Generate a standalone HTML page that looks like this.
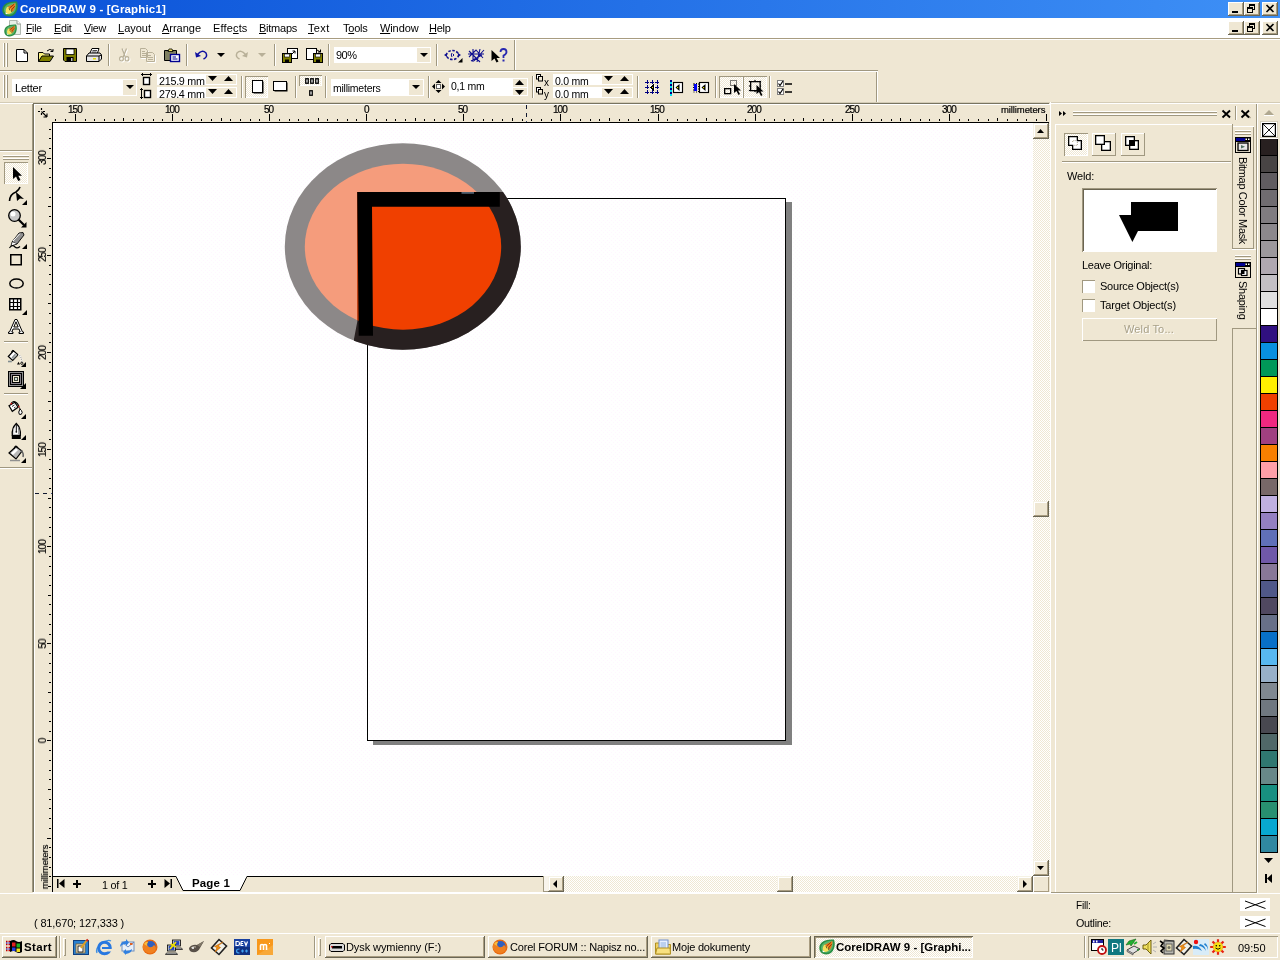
<!DOCTYPE html>
<html lang="en">
<head>
<meta charset="utf-8">
<title>CorelDRAW 9 - [Graphic1]</title>
<style>
html,body{margin:0;padding:0;}
body{width:1280px;height:960px;overflow:hidden;background:#EFE7D3;font-family:"Liberation Sans",sans-serif;font-size:11px;color:#000;position:relative;}
.a{position:absolute;}
.t{position:absolute;white-space:nowrap;line-height:13px;font-size:11px;will-change:transform;}
u{text-decoration:underline;text-underline-offset:1px;}
.hl{position:absolute;height:1px;}
.vl{position:absolute;width:1px;}
.btn{position:absolute;background:#EFE7D3;box-shadow:inset -1px -1px 0 #6A6654,inset 1px 1px 0 #fff,inset -2px -2px 0 #A89C80;}
.sunk{position:absolute;box-shadow:inset 1px 1px 0 #A09880,inset -1px -1px 0 #fff;}
.wht{position:absolute;background:#fff;}
svg{position:absolute;overflow:visible;}
</style>
</head>
<body>
<!-- s1_title.py -->
<div class="a" style="left:0px;top:0px;width:1280px;height:18px;background:linear-gradient(90deg,#0A52D8 0%,#3E90F6 100%);"></div>
<svg style="left:2px;top:1px" width="16" height="16" viewBox="0 0 17 17"><path d="M15.800 0.600 C17.300 4 17.200 9.500 14 13.500 C11.500 16.500 6 17.600 2.500 14.700 C-0.500 11.700 -0.300 7 2.500 4 C5.500 1 11 0.200 15.800 0.600 Z" fill="#2A8E44"/><path d="M14.500 2 C15.600 5 15.300 9 12.800 12.300 C10.600 14.800 6.500 15.600 3.800 13.400 C1.500 11 1.700 7.500 3.800 5.200 C6.200 2.800 10.500 1.800 14.500 2 Z" fill="#58B46C"/><path d="M14.200 2.200 L5.500 6.500 L11.500 11.500 Q14.800 7 14.200 2.200 Z" fill="#EE7A1C"/><path d="M12.800 3.500 L8 7.500 M13.500 5.500 L10 9.500" stroke="#7A3208" stroke-width="0.900" fill="none"/><path d="M5.500 6 Q9 7 11 11.500 Q8.500 14.800 5 13.200 Q2.600 10.500 5.500 6 Z" fill="#F6E05C"/><path d="M7.500 7.500 L8.500 10 M10.500 9.500 L10 11.500" stroke="#50380C" stroke-width="0.900"/><path d="M3.500 12.200 L6.500 13.600 L4.200 14.200 Z" fill="#fff"/></svg>
<div class="t" style="left:20.00px;top:2.00px;line-height:14px;font-size:11.5px;font-weight:bold;color:#fff;letter-spacing:0.173px;">CorelDRAW 9 - [Graphic1]</div>
<div class="btn" style="left:1228px;top:2px;width:16px;height:14px;"><div class="a" style="left:4px;top:9px;width:6px;height:2px;background:#000"></div></div>
<div class="btn" style="left:1244px;top:2px;width:16px;height:14px;"><div class="a" style="left:5px;top:2px;width:6px;height:6px;box-sizing:border-box;border:1px solid #000;border-top-width:2px;"></div><div class="a" style="left:3px;top:5px;width:6px;height:6px;box-sizing:border-box;border:1px solid #000;border-top-width:2px;background:#EFE7D3"></div></div>
<div class="btn" style="left:1262px;top:2px;width:16px;height:14px;"><svg style="left:4px;top:3px" width="8" height="7" viewBox="0 0 8 7"><path d="M0.5 0 L7.5 7 M7.5 0 L0.5 7" stroke="#000" stroke-width="1.6" fill="none"/></svg></div>
<div class="a" style="left:0px;top:18px;width:1280px;height:20px;background:#fff;"></div>
<div class="a" style="left:0px;top:38px;width:1280px;height:1px;background:#A89C80;"></div>
<div class="a" style="left:0px;top:39px;width:1280px;height:1px;background:#fff;"></div>
<svg style="left:5px;top:20px" width="16" height="17" viewBox="0 0 16 17"><path d="M4.5 0.5 H12 L15.5 4 V14.5 H4.5 Z" fill="#E8F0E8" stroke="#B0B8B0"/><path d="M12 0.5 V4 H15.5" fill="#fff" stroke="#909890"/></svg>
<svg style="left:4px;top:24px" width="13" height="13" viewBox="0 0 17 17"><path d="M15.800 0.600 C17.300 4 17.200 9.500 14 13.500 C11.500 16.500 6 17.600 2.500 14.700 C-0.500 11.700 -0.300 7 2.500 4 C5.500 1 11 0.200 15.800 0.600 Z" fill="#2A8E44"/><path d="M14.500 2 C15.600 5 15.300 9 12.800 12.300 C10.600 14.800 6.500 15.600 3.800 13.400 C1.500 11 1.700 7.500 3.800 5.200 C6.200 2.800 10.500 1.800 14.500 2 Z" fill="#58B46C"/><path d="M14.200 2.200 L5.500 6.500 L11.500 11.500 Q14.800 7 14.200 2.200 Z" fill="#EE7A1C"/><path d="M12.800 3.500 L8 7.500 M13.500 5.500 L10 9.500" stroke="#7A3208" stroke-width="0.900" fill="none"/><path d="M5.500 6 Q9 7 11 11.500 Q8.500 14.800 5 13.200 Q2.600 10.500 5.500 6 Z" fill="#F6E05C"/><path d="M7.500 7.500 L8.500 10 M10.500 9.500 L10 11.500" stroke="#50380C" stroke-width="0.900"/><path d="M3.500 12.200 L6.500 13.600 L4.200 14.200 Z" fill="#fff"/></svg>
<div class="t" style="left:26.00px;top:23.00px;line-height:12px;font-size:10.25px;letter-spacing:-0.204px;"><u>F</u>ile</div>
<div class="t" style="left:54.00px;top:22.00px;line-height:13px;font-size:10.75px;letter-spacing:-0.256px;"><u>E</u>dit</div>
<div class="t" style="left:84.00px;top:22.00px;line-height:13px;font-size:10.75px;letter-spacing:-0.276px;"><u>V</u>iew</div>
<div class="t" style="left:118.00px;top:22.00px;line-height:13px;letter-spacing:-0.004px;"><u>L</u>ayout</div>
<div class="t" style="left:162.00px;top:22.00px;line-height:13px;letter-spacing:-0.019px;"><u>A</u>rrange</div>
<div class="t" style="left:213.00px;top:22.00px;line-height:13px;letter-spacing:0.154px;">Effe<u>c</u>ts</div>
<div class="t" style="left:259.00px;top:22.00px;line-height:13px;letter-spacing:-0.248px;"><u>B</u>itmaps</div>
<div class="t" style="left:308.00px;top:22.00px;line-height:13px;letter-spacing:0.332px;"><u>T</u>ext</div>
<div class="t" style="left:343.00px;top:22.00px;line-height:13px;letter-spacing:-0.236px;">T<u>o</u>ols</div>
<div class="t" style="left:380.00px;top:22.00px;line-height:13px;letter-spacing:-0.104px;"><u>W</u>indow</div>
<div class="t" style="left:429.00px;top:22.00px;line-height:13px;letter-spacing:-0.281px;"><u>H</u>elp</div>
<div class="btn" style="left:1228px;top:21px;width:16px;height:14px;"><div class="a" style="left:4px;top:9px;width:6px;height:2px;background:#000"></div></div>
<div class="btn" style="left:1244px;top:21px;width:16px;height:14px;"><div class="a" style="left:5px;top:2px;width:6px;height:6px;box-sizing:border-box;border:1px solid #000;border-top-width:2px;"></div><div class="a" style="left:3px;top:5px;width:6px;height:6px;box-sizing:border-box;border:1px solid #000;border-top-width:2px;background:#EFE7D3"></div></div>
<div class="btn" style="left:1262px;top:21px;width:16px;height:14px;"><svg style="left:4px;top:3px" width="8" height="7" viewBox="0 0 8 7"><path d="M0.5 0 L7.5 7 M7.5 0 L0.5 7" stroke="#000" stroke-width="1.6" fill="none"/></svg></div>
<!-- s2_toolbar1.py -->
<div class="a" style="left:3px;top:43px;width:1px;height:24px;background:#fff;"></div>
<div class="a" style="left:4px;top:43px;width:1px;height:24px;background:#A09880;"></div>
<div class="a" style="left:6px;top:43px;width:1px;height:24px;background:#fff;"></div>
<div class="a" style="left:7px;top:43px;width:1px;height:24px;background:#A09880;"></div>
<svg style="left:16px;top:49px" width="12" height="13" viewBox="0 0 12 13"><path d="M0.5 0.5 H8 L11.5 4 V12.5 H0.5 Z" fill="#fff" stroke="#000"/><path d="M8 0.5 V4 H11.5" fill="none" stroke="#000"/></svg>
<svg style="left:38px;top:48px" width="16" height="14" viewBox="0 0 16 14"><path d="M9 3 Q12 0 14.5 2.5 M15 1 V3.5 H12.5" fill="none" stroke="#000"/><path d="M0.5 13.5 V4.5 H5 L6.5 6 H11.5 V8" fill="#F8F080" stroke="#000"/><path d="M0.5 13.5 L4 8 H15.5 L12 13.5 Z" fill="#808000" stroke="#000"/></svg>
<svg style="left:63px;top:48px" width="14" height="14" viewBox="0 0 14 14"><path d="M0.5 0.5 H13.5 V13.5 H2 L0.5 12 Z" fill="#808000" stroke="#000"/><rect x="3" y="1" width="8" height="5.5" fill="#fff" stroke="#000" stroke-width="0.8"/><rect x="3.5" y="9" width="7" height="4.5" fill="#000"/><rect x="8" y="10" width="1.5" height="3" fill="#C0C0C0"/></svg>
<svg style="left:86px;top:48px" width="16" height="14" viewBox="0 0 16 14"><path d="M4 5 L6 0.5 H13 L11.5 5" fill="#fff" stroke="#000"/><path d="M6.5 2.5 H11 M6 4 H10.5" stroke="#000" stroke-width="0.7"/><path d="M0.5 8 L3 5 H14 L15.5 7 V11 L13 13.5 H0.5 Z" fill="#E8E8E8" stroke="#000"/><path d="M0.5 8 H13 V13.5 M13 8 L15.5 7" fill="none" stroke="#000"/><rect x="7" y="10" width="3" height="1.5" fill="#E8E000"/></svg>
<div class="a" style="left:108px;top:44px;width:1px;height:22px;background:#A09880;"></div>
<div class="a" style="left:109px;top:44px;width:1px;height:22px;background:#fff;"></div>
<svg style="left:119px;top:48px" width="12" height="15" viewBox="0 0 12 15"><g transform="translate(1,1)"><path d="M3 0.500 L6.300 9 M7.500 0.500 L4.200 9" stroke="#fff" stroke-width="1.200" fill="none"/><ellipse cx="2.500" cy="10.800" rx="1.900" ry="2.200" fill="none" stroke="#fff" stroke-width="1.100"/><ellipse cx="8" cy="10.800" rx="1.900" ry="2.200" fill="none" stroke="#fff" stroke-width="1.100"/></g><path d="M3 0.500 L6.300 9 M7.500 0.500 L4.200 9" stroke="#B8B098" stroke-width="1.200" fill="none"/><ellipse cx="2.500" cy="10.800" rx="1.900" ry="2.200" fill="none" stroke="#B8B098" stroke-width="1.100"/><ellipse cx="8" cy="10.800" rx="1.900" ry="2.200" fill="none" stroke="#B8B098" stroke-width="1.100"/></svg>
<svg style="left:140px;top:48px" width="17" height="16" viewBox="0 0 17 16"><g transform="translate(1,1)"><path d="M0.500 0.500 H5.500 L7.500 2.500 V9.500 H0.500 Z M6.500 4.500 H12.500 L14.500 6.500 V13.500 H6.500 Z" fill="none" stroke="#fff"/><path d="M2 3.500 H5 M2 5.500 H6 M2 7.500 H6 M8 7.500 H11 M8 9.500 H13 M8 11.500 H13" stroke="#fff" stroke-width="1"/></g><path d="M0.500 0.500 H5.500 L7.500 2.500 V9.500 H0.500 Z M6.500 4.500 H12.500 L14.500 6.500 V13.500 H6.500 Z" fill="#EFE7D3" stroke="#B8B098"/><path d="M2 3.500 H5 M2 5.500 H6 M2 7.500 H6 M8 7.500 H11 M8 9.500 H13 M8 11.500 H13" stroke="#B8B098" stroke-width="1"/></svg>
<svg style="left:164px;top:48px" width="17" height="14" viewBox="0 0 17 14"><path d="M0.5 2.5 H12.5 V12.5 H0.5 Z" fill="#808060" stroke="#000"/><path d="M4 3.5 L5 1 H8 L9 3.5 Z" fill="#F0E060" stroke="#000" stroke-width="0.8"/><rect x="6.5" y="6.500" width="9" height="7" fill="#fff" stroke="#000090" stroke-width="1.4"/><path d="M8.500 9 H12 M8.500 11 H13.500" stroke="#000090" stroke-width="1.2"/></svg>
<div class="a" style="left:186px;top:44px;width:1px;height:22px;background:#A09880;"></div>
<div class="a" style="left:187px;top:44px;width:1px;height:22px;background:#fff;"></div>
<svg style="left:195px;top:50px" width="13" height="10" viewBox="0 0 13 10"><path d="M2.500 4.500 Q7 -1 11 3 Q13 7 8.500 9" fill="none" stroke="#1010A0" stroke-width="1.5"/><path d="M0 2 L1 7.500 L6 6 Z" fill="#1010A0"/></svg>
<svg style="left:217px;top:53px" width="8" height="4" viewBox="0 0 8 4"><path d="M0 0 H8 L4.0 4 Z" fill="#000"/></svg>
<svg style="left:235px;top:50px" width="13" height="10" viewBox="0 0 13 10"><path d="M10.500 4.500 Q6 -1 2 3 Q0 7 4.500 9" fill="none" stroke="#B8B098" stroke-width="1.5"/><path d="M13 2 L12 7.500 L7 6 Z" fill="#B8B098"/></svg>
<svg style="left:258px;top:53px" width="8" height="4" viewBox="0 0 8 4"><path d="M0 0 H8 L4.0 4 Z" fill="#B8B098"/></svg>
<div class="a" style="left:274px;top:44px;width:1px;height:22px;background:#A09880;"></div>
<div class="a" style="left:275px;top:44px;width:1px;height:22px;background:#fff;"></div>
<svg style="left:282px;top:48px" width="16" height="15" viewBox="0 0 16 15"><rect x="5.500" y="0.500" width="10" height="10" fill="#fff" stroke="#000"/><path d="M13 3 L9.500 6.500 M13 3 H10.500 M13 3 V5.500" stroke="#000" fill="none"/><rect x="0.500" y="5.500" width="9" height="9" fill="#808000" stroke="#000"/><rect x="2.500" y="6" width="5" height="3" fill="#fff" stroke="#000" stroke-width="0.6"/><rect x="3" y="11.500" width="4" height="3" fill="#000"/></svg>
<svg style="left:306px;top:48px" width="17" height="15" viewBox="0 0 17 15"><rect x="0.500" y="0.500" width="10" height="11" fill="#fff" stroke="#000"/><rect x="7.500" y="5.500" width="9" height="9" fill="#808000" stroke="#000"/><rect x="9.500" y="6" width="5" height="3" fill="#fff" stroke="#000" stroke-width="0.6"/><rect x="10" y="11.500" width="4" height="3" fill="#000"/><path d="M11 2 L14.500 4 M14.500 4 H12 M14.500 4 V1.500" stroke="#000" fill="none"/></svg>
<div class="a" style="left:328px;top:44px;width:1px;height:22px;background:#A09880;"></div>
<div class="a" style="left:329px;top:44px;width:1px;height:22px;background:#fff;"></div>
<div class="a" style="left:334px;top:47px;width:97px;height:16px;background:#fff;"></div>
<div class="a" style="left:417px;top:48px;width:13px;height:14px;background:#EFE7D3;"></div>
<svg style="left:419.5px;top:53px" width="8" height="4" viewBox="0 0 8 4"><path d="M0 0 H8 L4.0 4 Z" fill="#000"/></svg>
<div class="t" style="left:336.00px;top:49.00px;line-height:13px;letter-spacing:-0.505px;">90%</div>
<div class="a" style="left:436px;top:44px;width:1px;height:22px;background:#A09880;"></div>
<div class="a" style="left:437px;top:44px;width:1px;height:22px;background:#fff;"></div>
<svg style="left:444px;top:49px" width="19" height="14" viewBox="0 0 19 14"><ellipse cx="8.500" cy="6" rx="6" ry="4.500" fill="none" stroke="#101090" stroke-width="1.6" stroke-dasharray="2.5 1.5"/><path d="M0 6 L3 4 V8 Z M17 6 L14 4 V8 Z" fill="#101090"/><path d="M8 4 Q6.500 6 8 8 M9.500 5 V7" stroke="#101090" fill="none"/><path d="M18.500 9 V13.500 H14 Z" fill="#000"/></svg>
<svg style="left:468px;top:49px" width="17" height="14" viewBox="0 0 17 14"><path d="M1 2 L12 13 M1 8 L8 1 L15 9 M5 0 V13 M0 5 H16 M12 0 L9 13 M16 1 L6 12 M3 12 L14 6" stroke="#101090" stroke-width="1.1" fill="none"/></svg>
<svg style="left:491px;top:48px" width="17" height="15" viewBox="0 0 17 15"><path d="M0.500 2 V13 L3.500 10.500 L5.500 14.500 L7.500 13.500 L5.500 10 H9 Z" fill="#000"/><path d="M9.500 4 Q9.500 1 12.500 1 Q15.500 1 15.500 4 Q15.500 6 12.500 7.500 V10" fill="none" stroke="#2828B0" stroke-width="1.8"/><rect x="11.500" y="11.500" width="2" height="2" fill="#2828B0"/></svg>
<div class="a" style="left:514px;top:40px;width:1px;height:30px;background:#A09880;"></div>
<div class="a" style="left:515px;top:40px;width:1px;height:30px;background:#fff;"></div>
<!-- s3_propbar.py -->
<div class="a" style="left:0px;top:70px;width:878px;height:1px;background:#A09880;"></div>
<div class="a" style="left:0px;top:71px;width:878px;height:1px;background:#fff;"></div>
<div class="a" style="left:876px;top:72px;width:1px;height:30px;background:#A09880;"></div>
<div class="a" style="left:877px;top:71px;width:1px;height:31px;background:#fff;"></div>
<div class="a" style="left:3px;top:75px;width:1px;height:23px;background:#fff;"></div>
<div class="a" style="left:4px;top:75px;width:1px;height:23px;background:#A09880;"></div>
<div class="a" style="left:6px;top:75px;width:1px;height:23px;background:#fff;"></div>
<div class="a" style="left:7px;top:75px;width:1px;height:23px;background:#A09880;"></div>
<div class="a" style="left:12px;top:79px;width:125px;height:17px;background:#fff;"></div>
<div class="a" style="left:123px;top:80px;width:13px;height:15px;background:#EFE7D3;"></div>
<svg style="left:126px;top:85px" width="8" height="4" viewBox="0 0 8 4"><path d="M0 0 H8 L4.0 4 Z" fill="#000"/></svg>
<div class="t" style="left:15.00px;top:82.00px;line-height:13px;letter-spacing:-0.188px;">Letter</div>
<svg style="left:141px;top:73px" width="12" height="13" viewBox="0 0 12 13"><path d="M0 1.500 H11 M1.500 0 V3 M9.500 0 V3" stroke="#000" fill="none"/><rect x="2.500" y="4.500" width="6" height="7" fill="#fff" stroke="#000" stroke-width="1.4"/></svg>
<svg style="left:140px;top:88px" width="12" height="12" viewBox="0 0 12 12"><path d="M1.500 0 V11 M0 1.500 H3 M0 9.500 H3" stroke="#000" fill="none"/><rect x="4.500" y="2.500" width="6" height="7" fill="#fff" stroke="#000" stroke-width="1.4"/></svg>
<div class="a" style="left:157px;top:74px;width:80px;height:11px;background:#fff;"></div>
<div class="a" style="left:206px;top:75px;width:30px;height:9px;background:#EFE7D3;"></div>
<svg style="left:208px;top:76px" width="9" height="5" viewBox="0 0 9 5"><path d="M0 0 H9 L4.5 5 Z" fill="#000"/></svg>
<svg style="left:224px;top:76px" width="9" height="5" viewBox="0 0 9 5"><path d="M0 5 H9 L4.5 0 Z" fill="#000"/></svg>
<div class="a" style="left:157px;top:87px;width:80px;height:11px;background:#fff;"></div>
<div class="a" style="left:206px;top:88px;width:30px;height:9px;background:#EFE7D3;"></div>
<svg style="left:208px;top:89px" width="9" height="5" viewBox="0 0 9 5"><path d="M0 0 H9 L4.5 5 Z" fill="#000"/></svg>
<svg style="left:224px;top:89px" width="9" height="5" viewBox="0 0 9 5"><path d="M0 5 H9 L4.5 0 Z" fill="#000"/></svg>
<div class="t" style="left:159.00px;top:75.00px;line-height:13px;font-size:10.75px;letter-spacing:-0.262px;">215.9 mm</div>
<div class="t" style="left:159.00px;top:88.00px;line-height:13px;font-size:10.75px;letter-spacing:-0.262px;">279.4 mm</div>
<div class="a" style="left:241px;top:76px;width:1px;height:22px;background:#A09880;"></div>
<div class="a" style="left:242px;top:76px;width:1px;height:22px;background:#fff;"></div>
<div class="a" style="left:245px;top:76px;width:23px;height:22px;background-image:repeating-conic-gradient(#fff 0 25%,#EFE7D3 0 50%);background-size:2px 2px;box-shadow:inset 1px 1px 0 #A09880,inset -1px -1px 0 #fff;"></div>
<svg style="left:252px;top:80px" width="12" height="14" viewBox="0 0 12 14"><rect x="1.500" y="1.500" width="10" height="12" fill="#000"/><rect x="0.500" y="0.500" width="10" height="12" fill="#fff" stroke="#000"/></svg>
<svg style="left:273px;top:81px" width="15" height="11" viewBox="0 0 15 11"><rect x="1.500" y="1.500" width="13" height="9" fill="#000"/><rect x="0.500" y="0.500" width="13" height="9" fill="#fff" stroke="#000"/></svg>
<div class="a" style="left:295px;top:76px;width:1px;height:22px;background:#A09880;"></div>
<div class="a" style="left:296px;top:76px;width:1px;height:22px;background:#fff;"></div>
<div class="a" style="left:299px;top:75px;width:23px;height:11px;background-image:repeating-conic-gradient(#fff 0 25%,#EFE7D3 0 50%);background-size:2px 2px;box-shadow:inset 1px 1px 0 #A09880,inset -1px -1px 0 #fff;"></div>
<svg style="left:305px;top:78px" width="14" height="6" viewBox="0 0 14 6"><rect x="0.750" y="0.750" width="2.500" height="4.500" fill="#fff" stroke="#000" stroke-width="1.300"/><rect x="5.750" y="0.750" width="2.500" height="4.500" fill="#fff" stroke="#000" stroke-width="1.300"/><rect x="10.750" y="0.750" width="2.500" height="4.500" fill="#fff" stroke="#000" stroke-width="1.300"/></svg>
<svg style="left:309px;top:90px" width="4" height="6" viewBox="0 0 4 6"><rect x="0.750" y="0.750" width="2.500" height="4.500" fill="#fff" stroke="#000" stroke-width="1.300"/></svg>
<div class="a" style="left:325px;top:76px;width:1px;height:22px;background:#A09880;"></div>
<div class="a" style="left:326px;top:76px;width:1px;height:22px;background:#fff;"></div>
<div class="a" style="left:331px;top:79px;width:93px;height:17px;background:#fff;"></div>
<div class="a" style="left:409px;top:80px;width:14px;height:15px;background:#EFE7D3;"></div>
<svg style="left:411.5px;top:85px" width="8" height="4" viewBox="0 0 8 4"><path d="M0 0 H8 L4.0 4 Z" fill="#000"/></svg>
<div class="t" style="left:333.00px;top:82.00px;line-height:13px;font-size:10.5px;letter-spacing:-0.242px;">millimeters</div>
<div class="a" style="left:428px;top:76px;width:1px;height:22px;background:#A09880;"></div>
<div class="a" style="left:429px;top:76px;width:1px;height:22px;background:#fff;"></div>
<svg style="left:432px;top:80px" width="13" height="13" viewBox="0 0 13 13"><path d="M6.500 0 L9.500 3 H3.500 Z M6.500 13 L9.500 10 H3.500 Z M0 6.500 L3 3.500 V9.500 Z M13 6.500 L10 3.500 V9.500 Z" fill="#000"/><rect x="4.500" y="4.500" width="4" height="4" fill="#fff" stroke="#606060"/></svg>
<div class="a" style="left:449px;top:78px;width:79px;height:18px;background:#fff;"></div>
<div class="a" style="left:513px;top:79px;width:14px;height:8px;background:#EFE7D3;"></div>
<div class="a" style="left:513px;top:88px;width:14px;height:7px;background:#EFE7D3;"></div>
<svg style="left:515px;top:80px" width="9" height="5" viewBox="0 0 9 5"><path d="M0 5 H9 L4.5 0 Z" fill="#000"/></svg>
<svg style="left:515px;top:89.5px" width="9" height="5" viewBox="0 0 9 5"><path d="M0 0 H9 L4.5 5 Z" fill="#000"/></svg>
<div class="t" style="left:451.00px;top:80.00px;line-height:13px;font-size:10.5px;letter-spacing:-0.251px;">0,1 mm</div>
<div class="a" style="left:532px;top:76px;width:1px;height:22px;background:#A09880;"></div>
<div class="a" style="left:533px;top:76px;width:1px;height:22px;background:#fff;"></div>
<svg style="left:536px;top:74px" width="7" height="8" viewBox="0 0 7 8"><rect x="0.500" y="0.500" width="4" height="4.500" fill="#fff" stroke="#000"/><rect x="2.500" y="2.500" width="4" height="4.500" fill="#EFE7D3" stroke="#000"/></svg>
<div class="t" style="left:544.00px;top:77.00px;line-height:12px;font-size:10px;">x</div>
<svg style="left:536px;top:87px" width="7" height="8" viewBox="0 0 7 8"><rect x="0.500" y="0.500" width="4" height="4.500" fill="#fff" stroke="#000"/><rect x="2.500" y="2.500" width="4" height="4.500" fill="#EFE7D3" stroke="#000"/></svg>
<div class="t" style="left:544.00px;top:89.00px;line-height:12px;font-size:10px;">y</div>
<div class="a" style="left:553px;top:74px;width:80px;height:11px;background:#fff;"></div>
<div class="a" style="left:602px;top:75px;width:30px;height:9px;background:#EFE7D3;"></div>
<svg style="left:604px;top:76px" width="9" height="5" viewBox="0 0 9 5"><path d="M0 0 H9 L4.5 5 Z" fill="#000"/></svg>
<svg style="left:620px;top:76px" width="9" height="5" viewBox="0 0 9 5"><path d="M0 5 H9 L4.5 0 Z" fill="#000"/></svg>
<div class="a" style="left:553px;top:87px;width:80px;height:11px;background:#fff;"></div>
<div class="a" style="left:602px;top:88px;width:30px;height:9px;background:#EFE7D3;"></div>
<svg style="left:604px;top:89px" width="9" height="5" viewBox="0 0 9 5"><path d="M0 0 H9 L4.5 5 Z" fill="#000"/></svg>
<svg style="left:620px;top:89px" width="9" height="5" viewBox="0 0 9 5"><path d="M0 5 H9 L4.5 0 Z" fill="#000"/></svg>
<div class="t" style="left:555.00px;top:75.00px;line-height:13px;font-size:10.5px;letter-spacing:-0.251px;">0.0 mm</div>
<div class="t" style="left:555.00px;top:88.00px;line-height:13px;font-size:10.5px;letter-spacing:-0.251px;">0.0 mm</div>
<div class="a" style="left:637px;top:76px;width:1px;height:22px;background:#A09880;"></div>
<div class="a" style="left:638px;top:76px;width:1px;height:22px;background:#fff;"></div>
<svg style="left:645px;top:80px" width="15" height="15" viewBox="0 0 15 15"><g shape-rendering="crispEdges"><rect x="5" y="5" width="5" height="5" fill="#fff"/><rect x="0" y="2" width="4" height="1" fill="#000080"/><rect x="2" y="0" width="1" height="4" fill="#000080"/><rect x="0" y="7" width="4" height="1" fill="#000080"/><rect x="2" y="5" width="1" height="4" fill="#000080"/><rect x="0" y="12" width="4" height="1" fill="#000080"/><rect x="2" y="10" width="1" height="4" fill="#000080"/><rect x="5" y="2" width="4" height="1" fill="#000080"/><rect x="7" y="0" width="1" height="4" fill="#000080"/><rect x="5" y="12" width="4" height="1" fill="#000080"/><rect x="7" y="10" width="1" height="4" fill="#000080"/><rect x="10" y="2" width="4" height="1" fill="#000080"/><rect x="12" y="0" width="1" height="4" fill="#000080"/><rect x="10" y="7" width="4" height="1" fill="#000080"/><rect x="12" y="5" width="1" height="4" fill="#000080"/><rect x="10" y="12" width="4" height="1" fill="#000080"/><rect x="12" y="10" width="1" height="4" fill="#000080"/><path d="M5 7.500 L9 4 V11 Z" fill="#000"/><rect x="6.500" y="7" width="1.200" height="1.200" fill="#E8E000"/></g></svg>
<svg style="left:670px;top:80px" width="14" height="16" viewBox="0 0 14 16"><g shape-rendering="crispEdges"><rect x="0" y="0" width="2" height="2" fill="#000080"/><rect x="0" y="2" width="2" height="2" fill="#00E0F0"/><rect x="0" y="4" width="2" height="2" fill="#000080"/><rect x="0" y="6" width="2" height="2" fill="#00E0F0"/><rect x="0" y="8" width="2" height="2" fill="#000080"/><rect x="0" y="10" width="2" height="2" fill="#00E0F0"/><rect x="0" y="12" width="2" height="2" fill="#000080"/><rect x="0" y="14" width="2" height="2" fill="#00E0F0"/></g><rect x="3.5" y="2.500" width="9" height="10" fill="#fff" stroke="#000" stroke-width="1.150"/><path d="M5.5 7.500 L9.5 4 V11 Z" fill="#000"/><rect x="7" y="7" width="1.200" height="1.200" fill="#E8E000"/></svg>
<svg style="left:693px;top:80px" width="17" height="16" viewBox="0 0 17 16"><rect x="0.500" y="3.500" width="5" height="8.500" fill="none" stroke="#000" stroke-dasharray="1 1.500"/><rect x="1" y="4" width="3" height="7" fill="#0000F0"/><rect x="6.5" y="2.500" width="9" height="10" fill="#fff" stroke="#000" stroke-width="1.150"/><path d="M8.5 7.500 L12.5 4 V11 Z" fill="#000"/><rect x="10" y="7" width="1.200" height="1.200" fill="#E8E000"/></svg>
<div class="a" style="left:715px;top:76px;width:1px;height:22px;background:#A09880;"></div>
<div class="a" style="left:716px;top:76px;width:1px;height:22px;background:#fff;"></div>
<div class="a" style="left:719px;top:76px;width:24px;height:22px;background-image:repeating-conic-gradient(#fff 0 25%,#EFE7D3 0 50%);background-size:2px 2px;box-shadow:inset 1px 1px 0 #A09880,inset -1px -1px 0 #fff;"></div>
<div class="a" style="left:743px;top:76px;width:24px;height:22px;background-image:repeating-conic-gradient(#fff 0 25%,#EFE7D3 0 50%);background-size:2px 2px;box-shadow:inset 1px 1px 0 #A09880,inset -1px -1px 0 #fff;"></div>
<svg style="left:724px;top:79px" width="17" height="17" viewBox="0 0 17 17"><rect x="0.650" y="9.650" width="6" height="5" fill="none" stroke="#000" stroke-width="1.300"/><rect x="6.500" y="1.500" width="6" height="5" fill="none" stroke="#000" stroke-dasharray="1 1"/><g transform="translate(10,5)"><path d="M0 0 V9 L2.500 7 L4.500 11 L6 10 L4 6.500 H7 Z" fill="#000"/></g></svg>
<svg style="left:748px;top:79px" width="17" height="18" viewBox="0 0 17 18"><rect x="2.650" y="2.650" width="9.500" height="9" fill="none" stroke="#000" stroke-width="1.300"/><rect x="0.9" y="1.9" width="1.200" height="1.200" fill="#000"/><rect x="6.4" y="0.9" width="1.200" height="1.200" fill="#000"/><rect x="11.9" y="1.9" width="1.200" height="1.200" fill="#000"/><rect x="0.9" y="6.4" width="1.200" height="1.200" fill="#000"/><rect x="11.9" y="6.4" width="1.200" height="1.200" fill="#000"/><rect x="0.9" y="10.9" width="1.200" height="1.200" fill="#000"/><rect x="6.4" y="11.9" width="1.200" height="1.200" fill="#000"/><rect x="11.9" y="10.9" width="1.200" height="1.200" fill="#000"/><g transform="translate(8.500,6)"><path d="M0 0 V9 L2.500 7 L4.500 11 L6 10 L4 6.500 H7 Z" fill="#000"/></g></svg>
<div class="a" style="left:769px;top:76px;width:1px;height:22px;background:#A09880;"></div>
<div class="a" style="left:770px;top:76px;width:1px;height:22px;background:#fff;"></div>
<svg style="left:777px;top:80px" width="15" height="15" viewBox="0 0 15 15"><rect x="0.500" y="0.5" width="6" height="6" fill="#fff" stroke="#808080"/><path d="M1.500 3.5 L3 5.5 L6 1.0" stroke="#000" stroke-width="1.200" fill="none"/><path d="M8 4.0 H15" stroke="#000" stroke-width="1.500"/><rect x="0.500" y="8.5" width="6" height="6" fill="#fff" stroke="#808080"/><path d="M1.500 11.5 L3 13.5 L6 9.0" stroke="#000" stroke-width="1.200" fill="none"/><path d="M8 12.0 H15" stroke="#000" stroke-width="1.500"/></svg>
<div class="a" style="left:0px;top:102px;width:1280px;height:1px;background:#D4CCB6;"></div>
<div class="a" style="left:0px;top:103px;width:33px;height:1px;background:#fff;"></div>
<div class="a" style="left:33px;top:103px;width:1016px;height:1px;background:#787460;"></div>
<div class="a" style="left:34px;top:104px;width:1016px;height:1px;background:#fff;"></div>
<div class="a" style="left:1050px;top:103px;width:230px;height:1px;background:#fff;"></div>
<!-- s4_toolbox.py -->
<div class="a" style="left:32px;top:104px;width:1px;height:788px;background:#A09880;"></div>
<div class="a" style="left:33px;top:103px;width:1px;height:789px;background:#787460;"></div>
<div class="a" style="left:34px;top:104px;width:1px;height:788px;background:#fff;"></div>
<div class="a" style="left:0px;top:150px;width:32px;height:1px;background:#A09880;"></div>
<div class="a" style="left:0px;top:151px;width:32px;height:1px;background:#fff;"></div>
<div class="a" style="left:3px;top:155px;width:26px;height:1px;background:#fff;"></div>
<div class="a" style="left:3px;top:156px;width:26px;height:1px;background:#A09880;"></div>
<div class="a" style="left:3px;top:158px;width:26px;height:1px;background:#fff;"></div>
<div class="a" style="left:3px;top:159px;width:26px;height:1px;background:#A09880;"></div>
<div class="a" style="left:4px;top:162px;width:24px;height:22px;background-image:repeating-conic-gradient(#fff 0 25%,#EFE7D3 0 50%);background-size:2px 2px;box-shadow:inset 1px 1px 0 #A09880,inset -1px -1px 0 #fff;"></div>
<svg style="left:13px;top:167px" width="9" height="14" viewBox="0 0 9 14"><path d="M0 0 V12 L3 9.500 L5.200 14 L7.500 13 L5.300 8.700 H9 Z" fill="#000"/></svg>
<svg style="left:8px;top:187px" width="19" height="18" viewBox="0 0 19 18"><path d="M1.500 14 Q2 7 8 5 Q11 3 12 0" fill="none" stroke="#000" stroke-width="1.600"/><path d="M8 5 L9 14 L12 11.500 L16 12 Z" fill="#000"/><path d="M19 13 V18 H14 Z" fill="#000"/></svg>
<svg style="left:8px;top:209px" width="19" height="18" viewBox="0 0 19 18"><circle cx="6.500" cy="6.500" r="5.800" fill="#C8C8C8" stroke="#000" stroke-width="1.300"/><circle cx="5" cy="5" r="2.500" fill="#fff"/><path d="M10.500 10.500 L16 16" stroke="#000" stroke-width="2.200"/><path d="M18.500 13 V18.500 H13 Z" fill="#000"/></svg>
<svg style="left:9px;top:232px" width="18" height="17" viewBox="0 0 18 17"><path d="M3 10 L10 1 L14 0.500 L15 3 L8 12 Z" fill="#909090" stroke="#000" stroke-width="0.900"/><path d="M4 9 L11 1.500" stroke="#fff" stroke-width="1"/><path d="M3 10 L2 14 L8 12" fill="#fff" stroke="#000" stroke-width="0.800"/><path d="M0.500 16 Q3 12 6 15 Q8 17 11 14.500" fill="none" stroke="#000" stroke-width="1.200"/><path d="M18 12 V17 H13 Z" fill="#000"/></svg>
<svg style="left:10px;top:254px" width="12" height="12" viewBox="0 0 12 12"><rect x="0.750" y="0.750" width="10.500" height="10" fill="none" stroke="#000" stroke-width="1.500"/></svg>
<svg style="left:9px;top:278px" width="15" height="11" viewBox="0 0 15 11"><ellipse cx="7.500" cy="5.500" rx="6.700" ry="4.600" fill="none" stroke="#000" stroke-width="1.500"/></svg>
<svg style="left:9px;top:298px" width="18" height="17" viewBox="0 0 18 17"><rect x="0.750" y="0.750" width="11" height="11" fill="#fff" stroke="#000" stroke-width="1.500"/><path d="M4.500 0 V12 M8.500 0 V12 M0 4.500 H12 M0 8.500 H12" stroke="#000" stroke-width="1.200"/><path d="M18 12 V17 H13 Z" fill="#000"/></svg>
<svg style="left:8px;top:319px" width="16" height="15" viewBox="0 0 16 15"><path d="M0.500 14.500 H5 V13 H3.800 L5 10 H11 L12.200 13 H11 V14.500 H15.500 V13 H14.500 L9 0.500 H7 L1.500 13 H0.500 Z M5.800 8 L8 2.800 L10.200 8 Z" fill="#fff" stroke="#000" stroke-width="1" fill-rule="evenodd"/></svg>
<div class="a" style="left:4px;top:341px;width:24px;height:1px;background:#A09880;"></div>
<div class="a" style="left:4px;top:342px;width:24px;height:1px;background:#fff;"></div>
<svg style="left:8px;top:349px" width="18" height="18" viewBox="0 0 18 18"><path d="M0.300 7.500 L5.500 1.800 L10 5.700 L4.700 11.500 Z" fill="#fff" stroke="#000" stroke-width="1.200"/><path d="M5 10 L9 5.800 M4 9 L7.500 5" stroke="#8A9090" stroke-width="1.200"/><path d="M3.600 3.500 Q3.800 -0.300 6.600 2.600 M4 2 H6" fill="none" stroke="#000" stroke-width="1"/><path d="M0 12.500 H3.800" stroke="#808C90" stroke-width="1.600"/><path d="M10.500 5.500 Q13 7 14 13" fill="none" stroke="#fff" stroke-width="2.200" stroke-dasharray="1 1"/><path d="M11.500 6.500 Q13.500 8.500 14 13" fill="none" stroke="#A8A8A8" stroke-width="1.200" stroke-dasharray="1 1"/><path d="M9 15.500 L10.500 12.800 L12 15.500 Z" fill="#000"/><circle cx="13.800" cy="14.300" r="1.100" fill="none" stroke="#000" stroke-width="0.900"/><path d="M18 13 V18 H13 Z" fill="#000"/></svg>
<svg style="left:8px;top:371px" width="18" height="18" viewBox="0 0 18 18"><g shape-rendering="crispEdges"><rect x="0" y="0" width="16" height="16" fill="#000"/><rect x="1" y="1" width="14" height="14" fill="#8E8E8E"/><rect x="2" y="2" width="12" height="12" fill="#000"/><rect x="3" y="3" width="10" height="10" fill="#8A848C"/><rect x="4" y="4" width="8" height="8" fill="#000"/><rect x="5" y="5" width="6" height="6" fill="#F0E8D0"/><rect x="6" y="6" width="4" height="4" fill="#404840"/><rect x="7" y="7" width="2" height="2" fill="#D0E0D8"/></g><path d="M18 12 V18 H12 Z" fill="#000"/></svg>
<div class="a" style="left:4px;top:393px;width:24px;height:1px;background:#A09880;"></div>
<div class="a" style="left:4px;top:394px;width:24px;height:1px;background:#fff;"></div>
<svg style="left:8px;top:401px" width="18" height="18" viewBox="0 0 18 18"><path d="M1 4.800 L6.800 1.200 L10 6.300 L4.300 10.300 Z" fill="#fff" stroke="#000" stroke-width="1.200"/><path d="M4 5.500 L6.500 4 M6 7 L7.500 6" stroke="#000" stroke-width="0.800"/><path d="M3.200 2.800 Q4.500 -0.800 8.500 1.800 Q10.300 3.200 10.800 5.500" fill="none" stroke="#000" stroke-width="1.200"/><circle cx="3.300" cy="2.600" r="0.900" fill="#D01010"/><path d="M10.600 4.800 L11.400 6.600" stroke="#D01010" stroke-width="1.200"/><path d="M11.400 6.600 L12.200 8.300" stroke="#000" stroke-width="1"/><path d="M12 8 Q9.800 11.500 11.300 13.300 Q13.800 14.300 14.200 11.500 Q13.800 9.300 12 8 Z" fill="#fff" stroke="#000" stroke-width="1"/><path d="M18 13 V18 H13 Z" fill="#000"/></svg>
<svg style="left:11px;top:423px" width="15" height="18" viewBox="0 0 15 18"><path d="M5.300 0.500 Q10 5 9.300 12.300 H1.300 Q0.600 5 5.300 0.500 Z" fill="#fff" stroke="#000" stroke-width="1.300"/><path d="M5.300 1.500 V8" stroke="#000" stroke-width="1"/><circle cx="5.300" cy="8.800" r="0.900" fill="#000"/><path d="M7.300 4 Q8.300 8 7.800 11.300" stroke="#808080" stroke-width="1.200" fill="none"/><path d="M3 5 Q2.500 8 2.800 11" stroke="#C0C0C0" stroke-width="0.800" fill="none"/><rect x="0.800" y="12.300" width="9" height="3.700" fill="#000"/><path d="M15 12 V17 H10 Z" fill="#000"/></svg>
<svg style="left:8px;top:445px" width="18" height="18" viewBox="0 0 18 18"><path d="M1 8 L8 1.500 L14 6 L8 14 Z" fill="#B8B8B8" stroke="#000" stroke-width="1.200"/><path d="M3 8 L8 3.500 L10 5 L5 10 Z" fill="#fff"/><path d="M6 4 Q7 -1 10 3" fill="none" stroke="#000" stroke-width="1.200"/><path d="M13 5.500 Q16 8 15 12" stroke="#606060" stroke-width="1.500" fill="none"/><path d="M2 15.500 H12" stroke="#909090" stroke-width="1.500"/><path d="M18 13 V18 H13 Z" fill="#000"/></svg>
<div class="a" style="left:0px;top:467px;width:32px;height:1px;background:#A09880;"></div>
<div class="a" style="left:0px;top:468px;width:32px;height:1px;background:#fff;"></div>
<!-- s5_canvas.py -->
<div class="a" style="left:52px;top:122px;width:997px;height:770px;background:#000;"></div>
<div class="a" style="left:53px;top:123px;width:980px;height:753px;background:#FFFFFF;"></div>
<svg style="left:0px;top:0px" width="1280" height="960" viewBox="0 0 1280 960"><defs><pattern id="dp" width="4" height="4" patternUnits="userSpaceOnUse"><rect x="3" y="0" width="1" height="1" fill="#FFF6FF"/><rect x="1" y="2" width="1" height="1" fill="#FFF6FF"/></pattern></defs><rect x="53" y="123" width="980" height="753" fill="url(#dp)" shape-rendering="crispEdges"/></svg>
<svg style="left:0px;top:0px" width="1280" height="130" viewBox="0 0 1280 130"><path d="M55.5 119 V121 M65.5 119 V121 M75.5 114 V121 M85.5 119 V121 M94.5 119 V121 M104.5 119 V121 M114.5 119 V121 M123.5 117.5 V121 M133.5 119 V121 M143.5 119 V121 M153.5 119 V121 M162.5 119 V121 M172.5 114 V121 M182.5 119 V121 M191.5 119 V121 M201.5 119 V121 M211.5 119 V121 M221.5 117.5 V121 M230.5 119 V121 M240.5 119 V121 M250.5 119 V121 M259.5 119 V121 M269.5 114 V121 M279.5 119 V121 M289.5 119 V121 M298.5 119 V121 M308.5 119 V121 M318.5 117.5 V121 M327.5 119 V121 M337.5 119 V121 M347.5 119 V121 M356.5 119 V121 M366.5 114 V121 M376.5 119 V121 M386.5 119 V121 M395.5 119 V121 M405.5 119 V121 M415.5 117.5 V121 M424.5 119 V121 M434.5 119 V121 M444.5 119 V121 M454.5 119 V121 M463.5 114 V121 M473.5 119 V121 M483.5 119 V121 M492.5 119 V121 M502.5 119 V121 M512.5 117.5 V121 M522.5 119 V121 M531.5 119 V121 M541.5 119 V121 M551.5 119 V121 M560.5 114 V121 M570.5 119 V121 M580.5 119 V121 M590.5 119 V121 M599.5 119 V121 M609.5 117.5 V121 M619.5 119 V121 M628.5 119 V121 M638.5 119 V121 M648.5 119 V121 M658.5 114 V121 M667.5 119 V121 M677.5 119 V121 M687.5 119 V121 M696.5 119 V121 M706.5 117.5 V121 M716.5 119 V121 M725.5 119 V121 M735.5 119 V121 M745.5 119 V121 M755.5 114 V121 M764.5 119 V121 M774.5 119 V121 M784.5 119 V121 M793.5 119 V121 M803.5 117.5 V121 M813.5 119 V121 M823.5 119 V121 M832.5 119 V121 M842.5 119 V121 M852.5 114 V121 M861.5 119 V121 M871.5 119 V121 M881.5 119 V121 M891.5 119 V121 M900.5 117.5 V121 M910.5 119 V121 M920.5 119 V121 M929.5 119 V121 M939.5 119 V121 M949.5 114 V121 M959.5 119 V121 M968.5 119 V121 M978.5 119 V121 M988.5 119 V121 M997.5 117.5 V121 M1007.5 119 V121 M1017.5 119 V121 M1026.5 119 V121 M1036.5 119 V121 M1046.5 114 V121 " stroke="#000" stroke-width="1" fill="none" shape-rendering="crispEdges"/></svg>
<div class="t" style="left:68.00px;top:104.00px;line-height:12px;font-size:10px;letter-spacing:-0.961px;-webkit-text-stroke:0.2px #000;">150</div>
<div class="t" style="left:165.00px;top:104.00px;line-height:12px;font-size:10px;letter-spacing:-0.961px;-webkit-text-stroke:0.2px #000;">100</div>
<div class="t" style="left:264.00px;top:104.00px;line-height:12px;font-size:10px;letter-spacing:-0.961px;-webkit-text-stroke:0.2px #000;">50</div>
<div class="t" style="left:364.00px;top:104.00px;line-height:12px;font-size:10px;letter-spacing:-0.961px;-webkit-text-stroke:0.2px #000;">0</div>
<div class="t" style="left:458.00px;top:104.00px;line-height:12px;font-size:10px;letter-spacing:-0.961px;-webkit-text-stroke:0.2px #000;">50</div>
<div class="t" style="left:553.00px;top:104.00px;line-height:12px;font-size:10px;letter-spacing:-0.961px;-webkit-text-stroke:0.2px #000;">100</div>
<div class="t" style="left:650.00px;top:104.00px;line-height:12px;font-size:10px;letter-spacing:-0.961px;-webkit-text-stroke:0.2px #000;">150</div>
<div class="t" style="left:747.00px;top:104.00px;line-height:12px;font-size:10px;letter-spacing:-0.961px;-webkit-text-stroke:0.2px #000;">200</div>
<div class="t" style="left:845.00px;top:104.00px;line-height:12px;font-size:10px;letter-spacing:-0.961px;-webkit-text-stroke:0.2px #000;">250</div>
<div class="t" style="left:942.00px;top:104.00px;line-height:12px;font-size:10px;letter-spacing:-0.961px;-webkit-text-stroke:0.2px #000;">300</div>
<div class="t" style="left:1001.00px;top:104.00px;line-height:11px;font-size:9.5px;letter-spacing:-0.099px;-webkit-text-stroke:0.2px #000;">millimeters</div>
<svg style="left:38px;top:108px" width="11" height="11" viewBox="0 0 11 11"><path d="M3.500 0 V2 M3.500 5 V7 M0 3.500 H2 M5 3.500 H7" stroke="#000" stroke-width="1.200"/><path d="M3.500 3.500 L9 9 M9 9 V5.500 M9 9 H5.500" stroke="#000" stroke-width="1.100" fill="none"/></svg>
<svg style="left:0px;top:0px" width="60" height="960" viewBox="0 0 60 960"><path d="M47.5 886.5 H51 M49 876.5 H51 M49 867.5 H51 M49 857.5 H51 M49 847.5 H51 M47 838.5 H51 M49 828.5 H51 M49 818.5 H51 M49 808.5 H51 M49 799.5 H51 M47.5 789.5 H51 M49 779.5 H51 M49 770.5 H51 M49 760.5 H51 M49 750.5 H51 M47 740.5 H51 M49 731.5 H51 M49 721.5 H51 M49 711.5 H51 M49 702.5 H51 M47.5 692.5 H51 M49 682.5 H51 M49 672.5 H51 M49 663.5 H51 M49 653.5 H51 M47 643.5 H51 M49 634.5 H51 M49 624.5 H51 M49 614.5 H51 M49 604.5 H51 M47.5 595.5 H51 M49 585.5 H51 M49 575.5 H51 M49 566.5 H51 M49 556.5 H51 M47 546.5 H51 M49 536.5 H51 M49 527.5 H51 M49 517.5 H51 M49 507.5 H51 M47.5 498.5 H51 M49 488.5 H51 M49 478.5 H51 M49 469.5 H51 M49 459.5 H51 M47 449.5 H51 M49 439.5 H51 M49 430.5 H51 M49 420.5 H51 M49 410.5 H51 M47.5 401.5 H51 M49 391.5 H51 M49 381.5 H51 M49 371.5 H51 M49 362.5 H51 M47 352.5 H51 M49 342.5 H51 M49 333.5 H51 M49 323.5 H51 M49 313.5 H51 M47.5 303.5 H51 M49 294.5 H51 M49 284.5 H51 M49 274.5 H51 M49 265.5 H51 M47 255.5 H51 M49 245.5 H51 M49 235.5 H51 M49 226.5 H51 M49 216.5 H51 M47.5 206.5 H51 M49 197.5 H51 M49 187.5 H51 M49 177.5 H51 M49 168.5 H51 M47 158.5 H51 M49 148.5 H51 M49 138.5 H51 M49 129.5 H51 " stroke="#000" stroke-width="1" fill="none" shape-rendering="crispEdges"/></svg>
<div class="t" style="left:43px;top:740.9px;font-size:10px;line-height:10px;width:0;height:0;-webkit-text-stroke:0.2px #000;"><div style="position:absolute;left:0;top:0;transform:translate(-50%,-50%) rotate(-90deg);letter-spacing:-0.961px;">0</div></div>
<div class="t" style="left:43px;top:643.8px;font-size:10px;line-height:10px;width:0;height:0;-webkit-text-stroke:0.2px #000;"><div style="position:absolute;left:0;top:0;transform:translate(-50%,-50%) rotate(-90deg);letter-spacing:-0.961px;">50</div></div>
<div class="t" style="left:43px;top:546.7px;font-size:10px;line-height:10px;width:0;height:0;-webkit-text-stroke:0.2px #000;"><div style="position:absolute;left:0;top:0;transform:translate(-50%,-50%) rotate(-90deg);letter-spacing:-0.961px;">100</div></div>
<div class="t" style="left:43px;top:449.6px;font-size:10px;line-height:10px;width:0;height:0;-webkit-text-stroke:0.2px #000;"><div style="position:absolute;left:0;top:0;transform:translate(-50%,-50%) rotate(-90deg);letter-spacing:-0.961px;">150</div></div>
<div class="t" style="left:43px;top:352.5px;font-size:10px;line-height:10px;width:0;height:0;-webkit-text-stroke:0.2px #000;"><div style="position:absolute;left:0;top:0;transform:translate(-50%,-50%) rotate(-90deg);letter-spacing:-0.961px;">200</div></div>
<div class="t" style="left:43px;top:255.4px;font-size:10px;line-height:10px;width:0;height:0;-webkit-text-stroke:0.2px #000;"><div style="position:absolute;left:0;top:0;transform:translate(-50%,-50%) rotate(-90deg);letter-spacing:-0.961px;">250</div></div>
<div class="t" style="left:43px;top:158.3px;font-size:10px;line-height:10px;width:0;height:0;-webkit-text-stroke:0.2px #000;"><div style="position:absolute;left:0;top:0;transform:translate(-50%,-50%) rotate(-90deg);letter-spacing:-0.961px;">300</div></div>
<div class="t" style="left:44.500px;top:866.800px;font-size:9.500px;line-height:10px;width:0;height:0;-webkit-text-stroke:0.2px #000;"><div style="position:absolute;left:0;top:0;transform:translate(-50%,-50%) rotate(-90deg);letter-spacing:-0.099px;">millimeters</div></div>
<div class="a" style="left:526px;top:105px;width:1px;height:4px;background:#101830;"></div>
<div class="a" style="left:526px;top:113px;width:1px;height:4px;background:#101830;"></div>
<div class="a" style="left:526px;top:121px;width:1px;height:1px;background:#405080;"></div>
<div class="a" style="left:35px;top:493px;width:4px;height:1px;background:#101830;"></div>
<div class="a" style="left:43px;top:493px;width:4px;height:1px;background:#101830;"></div>
<div class="a" style="left:51px;top:493px;width:1px;height:1px;background:#405080;"></div>
<div class="a" style="left:373px;top:202px;width:419px;height:543px;background:#808080;"></div>
<div class="a" style="left:367px;top:198px;width:419px;height:543px;background:#000;"></div>
<div class="a" style="left:368px;top:199px;width:417px;height:541px;background:#FFFFFF;"></div>
<svg style="left:0px;top:0px" width="1280" height="960" viewBox="0 0 1280 960"><rect x="368" y="199" width="417" height="541" fill="url(#dp)" shape-rendering="crispEdges"/></svg>
<svg style="left:0px;top:0px" width="1280" height="960" viewBox="0 0 1280 960"><defs><clipPath id="cq"><path d="M357.200 191.900 H600 V400 H353 L354 339 L357.400 321 Z"/></clipPath></defs><ellipse cx="402.800" cy="246.500" rx="118" ry="103.300" fill="#8C8888"/><ellipse cx="403" cy="246.700" rx="98.200" ry="83" fill="#F59C7C"/><g clip-path="url(#cq)"><ellipse cx="402.800" cy="246.500" rx="118" ry="103.300" fill="#282020"/><ellipse cx="403" cy="246.700" rx="98.200" ry="83" fill="#F04000"/></g><path d="M357.200 192 H499.800 V206.800 H372 L373 335.800 H358.700 Z" fill="#000"/><rect x="461.500" y="192" width="12.500" height="1.800" fill="#506070"/></svg>
<div class="a" style="left:1033px;top:123px;width:17px;height:753px;background:;background-image:repeating-conic-gradient(#fff 0 25%,#EFE7D3 0 50%);background-size:2px 2px;"></div>
<div class="a" style="left:1033px;top:123px;width:16px;height:16px;background:#EFE7D3;box-shadow:inset -1px -1px 0 #6A6654,inset 1px 1px 0 #F6F2E6,inset -2px -2px 0 #A89C80,inset 2px 2px 0 #fff;"></div>
<svg style="left:1037px;top:129px" width="7" height="4" viewBox="0 0 7 4"><path d="M0 4 H7 L3.5 0 Z" fill="#000"/></svg>
<div class="a" style="left:1033px;top:860px;width:16px;height:16px;background:#EFE7D3;box-shadow:inset -1px -1px 0 #6A6654,inset 1px 1px 0 #F6F2E6,inset -2px -2px 0 #A89C80,inset 2px 2px 0 #fff;"></div>
<svg style="left:1037px;top:866px" width="7" height="4" viewBox="0 0 7 4"><path d="M0 0 H7 L3.5 4 Z" fill="#000"/></svg>
<div class="a" style="left:1033px;top:501px;width:16px;height:16px;background:#EFE7D3;box-shadow:inset -1px -1px 0 #6A6654,inset 1px 1px 0 #F6F2E6,inset -2px -2px 0 #A89C80,inset 2px 2px 0 #fff;"></div>
<div class="a" style="left:1033px;top:876px;width:16px;height:16px;background:#EFE7D3;box-shadow:inset 1px 1px 0 #fff,inset -1px -1px 0 #A89C80;"></div>
<div class="a" style="left:53px;top:877px;width:491px;height:15px;background:#EFE7D3;"></div>
<div class="a" style="left:548px;top:876px;width:485px;height:16px;background:;background-image:repeating-conic-gradient(#fff 0 25%,#EFE7D3 0 50%);background-size:2px 2px;"></div>
<div class="a" style="left:543px;top:876px;width:5px;height:16px;background:#F8F4EC;box-shadow:inset 1px 0 0 #A09880,inset 0 -1px 0 #A09880;"></div>
<div class="a" style="left:548px;top:876px;width:16px;height:16px;background:#EFE7D3;box-shadow:inset -1px -1px 0 #6A6654,inset 1px 1px 0 #F6F2E6,inset -2px -2px 0 #A89C80,inset 2px 2px 0 #fff;"></div>
<svg style="left:553px;top:880px" width="4" height="8" viewBox="0 0 4 8"><path d="M4 0 V8 L0 4 Z" fill="#000"/></svg>
<div class="a" style="left:1017px;top:876px;width:16px;height:16px;background:#EFE7D3;box-shadow:inset -1px -1px 0 #6A6654,inset 1px 1px 0 #F6F2E6,inset -2px -2px 0 #A89C80,inset 2px 2px 0 #fff;"></div>
<svg style="left:1023px;top:880px" width="4" height="8" viewBox="0 0 4 8"><path d="M0 0 V8 L4 4 Z" fill="#000"/></svg>
<div class="a" style="left:777px;top:876px;width:16px;height:16px;background:#EFE7D3;box-shadow:inset -1px -1px 0 #6A6654,inset 1px 1px 0 #F6F2E6,inset -2px -2px 0 #A89C80,inset 2px 2px 0 #fff;"></div>
<svg style="left:170px;top:874px" width="90" height="20" viewBox="0 0 90 20"><path d="M6 2.500 L13 16.500 H70 L77 2.500" fill="#fff" stroke="#000" stroke-width="1"/><path d="M6.500 2.500 H76.500" stroke="#fff" stroke-width="1.400"/></svg>
<div class="t" style="left:192.00px;top:876.00px;line-height:14px;font-size:11.5px;font-weight:bold;letter-spacing:0.154px;">Page 1</div>
<svg style="left:57px;top:879px" width="8" height="9" viewBox="0 0 8 9"><path d="M0.750 0 V9" stroke="#000" stroke-width="1.500"/><path d="M7.500 0 V9 L2 4.500 Z" fill="#000"/></svg>
<svg style="left:73px;top:880px" width="8" height="8" viewBox="0 0 8 8"><path d="M4 0 V8 M0 4 H8" stroke="#000" stroke-width="2"/></svg>
<div class="t" style="left:102.00px;top:879.00px;line-height:13px;font-size:10.75px;letter-spacing:-0.232px;">1 of 1</div>
<svg style="left:148px;top:880px" width="8" height="8" viewBox="0 0 8 8"><path d="M4 0 V8 M0 4 H8" stroke="#000" stroke-width="2"/></svg>
<svg style="left:164px;top:879px" width="8" height="9" viewBox="0 0 8 9"><path d="M7.250 0 V9" stroke="#000" stroke-width="1.500"/><path d="M0.500 0 V9 L6 4.500 Z" fill="#000"/></svg>
<div class="a" style="left:33px;top:892px;width:1018px;height:1px;background:#fff;"></div>
<div class="a" style="left:0px;top:893px;width:1280px;height:1px;background:#fff;"></div>
<!-- s6_docker.py -->
<div class="a" style="left:1050px;top:102px;width:1px;height:790px;background:#fff;"></div>
<div class="a" style="left:1051px;top:892px;width:206px;height:1px;background:#A09880;"></div>
<svg style="left:1059px;top:111px" width="7" height="5" viewBox="0 0 7 5"><path d="M0 0 V5 L3 2.500 Z M4 0 V5 L7 2.500 Z" fill="#000"/></svg>
<div class="a" style="left:1073px;top:111px;width:144px;height:1px;background:#fff;"></div>
<div class="a" style="left:1073px;top:112px;width:144px;height:1px;background:#A09880;"></div>
<div class="a" style="left:1073px;top:114px;width:144px;height:1px;background:#fff;"></div>
<div class="a" style="left:1073px;top:115px;width:144px;height:1px;background:#A09880;"></div>
<svg style="left:1222px;top:110px" width="9" height="8" viewBox="0 0 9 8"><path d="M0.500 0.500 L8 7.500 M8 0.500 L0.500 7.500" stroke="#000" stroke-width="1.900"/></svg>
<div class="a" style="left:1235px;top:106px;width:1px;height:14px;background:#A09880;"></div>
<div class="a" style="left:1236px;top:106px;width:1px;height:14px;background:#fff;"></div>
<svg style="left:1241px;top:110px" width="10" height="8" viewBox="0 0 10 8"><path d="M1.500 1 L9.500 8" stroke="#A09880" stroke-width="1.300"/><path d="M0.500 0.500 L8 7.500 M8 0.500 L0.500 7.500" stroke="#000" stroke-width="1.900"/></svg>
<div class="a" style="left:1055px;top:124px;width:1px;height:768px;background:#fff;"></div>
<div class="a" style="left:1055px;top:124px;width:178px;height:1px;background:#fff;"></div>
<div class="a" style="left:1232px;top:124px;width:1px;height:125px;background:#A09880;"></div>
<div class="a" style="left:1232px;top:328px;width:1px;height:564px;background:#A09880;"></div>
<div class="a" style="left:1064px;top:133px;width:24px;height:23px;background-image:repeating-conic-gradient(#fff 0 25%,#EFE7D3 0 50%);background-size:2px 2px;box-shadow:inset 1px 1px 0 #A09880,inset -1px -1px 0 #fff;"></div>
<div class="a" style="left:1092px;top:133px;width:24px;height:23px;box-shadow:inset -1px -1px 0 #A09880,inset 1px 1px 0 #fff;"></div>
<div class="a" style="left:1121px;top:133px;width:24px;height:23px;box-shadow:inset -1px -1px 0 #A09880,inset 1px 1px 0 #fff;"></div>
<svg style="left:1068px;top:136px" width="14" height="14" viewBox="0 0 14 14"><path d="M0.650 0.650 H9.350 V4.650 H13.350 V13.350 H4.650 V9.350 H0.650 Z" fill="#fff" stroke="#000" stroke-width="1.300"/><path d="M4.650 6 V4.650 H8 M9.350 6 V9.350 H6" fill="none" stroke="#B0A890" stroke-width="1" stroke-dasharray="1 1"/></svg>
<svg style="left:1095px;top:135px" width="16" height="16" viewBox="0 0 16 16"><rect x="6.650" y="6.650" width="8.700" height="8.700" fill="#fff" stroke="#000" stroke-width="1.300"/><rect x="0.650" y="0.650" width="8.700" height="8.700" fill="#fff" stroke="#000" stroke-width="1.300"/></svg>
<svg style="left:1125px;top:136px" width="14" height="14" viewBox="0 0 14 14"><rect x="0.650" y="0.650" width="8.700" height="8.700" fill="#fff" stroke="#000" stroke-width="1.300"/><rect x="4.650" y="4.650" width="8.700" height="8.700" fill="#fff" stroke="#000" stroke-width="1.300"/><rect x="4" y="4" width="6" height="6" fill="#000"/></svg>
<div class="a" style="left:1062px;top:161px;width:169px;height:1px;background:#A09880;"></div>
<div class="a" style="left:1062px;top:162px;width:169px;height:1px;background:#fff;"></div>
<div class="t" style="left:1067.00px;top:170.00px;line-height:13px;letter-spacing:-0.184px;">Weld:</div>
<div class="a" style="left:1082px;top:188px;width:135px;height:64px;background:#fff;box-shadow:inset 1px 1px 0 #A09880,inset -1px -1px 0 #fff,inset 2px 2px 0 #6A6450;"></div>
<svg style="left:1082px;top:188px" width="135" height="64" viewBox="0 0 135 64"><path d="M49 14 H96 V43 H56 L50.400 54 L37 27 H49 Z" fill="#000"/></svg>
<div class="t" style="left:1082.00px;top:259.00px;line-height:13px;letter-spacing:-0.265px;">Leave Original:</div>
<div class="a" style="left:1082px;top:280px;width:13px;height:13px;background:#fff;box-shadow:inset 1px 1px 0 #A09880,inset -1px -1px 0 #fff;"></div>
<div class="t" style="left:1100.00px;top:280.00px;line-height:13px;letter-spacing:-0.220px;">Source Object(s)</div>
<div class="a" style="left:1082px;top:299px;width:13px;height:13px;background:#fff;box-shadow:inset 1px 1px 0 #A09880,inset -1px -1px 0 #fff;"></div>
<div class="t" style="left:1100.00px;top:299.00px;line-height:13px;letter-spacing:-0.140px;">Target Object(s)</div>
<div class="a" style="left:1082px;top:318px;width:135px;height:23px;box-shadow:inset 1px 1px 0 #fff,inset -1px -1px 0 #A09880;"></div>
<div class="t" style="left:1125.00px;top:324.00px;line-height:13px;color:#fff;letter-spacing:0.150px;">Weld To...</div>
<div class="t" style="left:1124.00px;top:323.00px;line-height:13px;color:#A8A088;letter-spacing:0.150px;">Weld To...</div>
<div class="a" style="left:1233px;top:126px;width:21px;height:1px;background:#fff;"></div>
<div class="a" style="left:1253px;top:127px;width:1px;height:122px;background:#A09880;"></div>
<div class="a" style="left:1232px;top:249px;width:24px;height:1px;background:#fff;"></div>
<div class="a" style="left:1233px;top:248px;width:21px;height:1px;background:#A09880;"></div>
<div class="a" style="left:1235px;top:130px;width:16px;height:1px;background:#fff;"></div>
<div class="a" style="left:1235px;top:131px;width:16px;height:1px;background:#A09880;"></div>
<div class="a" style="left:1235px;top:133px;width:16px;height:1px;background:#fff;"></div>
<div class="a" style="left:1235px;top:134px;width:16px;height:1px;background:#A09880;"></div>
<svg style="left:1235px;top:137px" width="16" height="16" viewBox="0 0 16 16"><rect x="0.500" y="0.500" width="15" height="15" fill="#EFE7D3" stroke="#000"/><rect x="1" y="1" width="14" height="4" fill="#000"/><rect x="1" y="1" width="9" height="3" fill="#000090"/><rect x="3" y="6" width="10" height="7.500" fill="#E8E8E8" stroke="#000" stroke-width="1.300"/><path d="M6 8 L10 9.700 L6 11.500 Z" fill="#507060"/><rect x="10.500" y="1.500" width="1.500" height="1.500" fill="#fff"/><rect x="13" y="1.500" width="1.500" height="1.500" fill="#fff"/></svg>
<div class="t" style="left:1242.8px;top:156.8px;width:0;height:0;font-size:11px;line-height:12px;"><div style="position:absolute;left:0;top:0;transform-origin:0 0;transform:rotate(90deg) translate(0,-50%);letter-spacing:-0.348px;">Bitmap Color Mask</div></div>
<div class="a" style="left:1232px;top:328px;width:24px;height:1px;background:#A09880;"></div>
<div class="a" style="left:1235px;top:255px;width:16px;height:1px;background:#fff;"></div>
<div class="a" style="left:1235px;top:256px;width:16px;height:1px;background:#A09880;"></div>
<div class="a" style="left:1235px;top:258px;width:16px;height:1px;background:#fff;"></div>
<div class="a" style="left:1235px;top:259px;width:16px;height:1px;background:#A09880;"></div>
<svg style="left:1235px;top:262px" width="16" height="16" viewBox="0 0 16 16"><rect x="0.500" y="0.500" width="15" height="15" fill="#EFE7D3" stroke="#000"/><rect x="1" y="1" width="14" height="4" fill="#000"/><rect x="1" y="1" width="9" height="3" fill="#000090"/><rect x="3.500" y="6.500" width="6" height="5.500" fill="#fff" stroke="#000" stroke-width="1.200"/><rect x="6.500" y="8.500" width="5.500" height="5" fill="#fff" stroke="#000" stroke-width="1.200"/><rect x="6.500" y="8.500" width="3" height="3.500" fill="#000"/><rect x="10.500" y="1.500" width="1.500" height="1.500" fill="#fff"/><rect x="13" y="1.500" width="1.500" height="1.500" fill="#fff"/></svg>
<div class="t" style="left:1243.3px;top:281px;width:0;height:0;font-size:11px;line-height:12px;"><div style="position:absolute;left:0;top:0;transform-origin:0 0;transform:rotate(90deg) translate(0,-50%);letter-spacing:-0.267px;">Shaping</div></div>
<!-- s7_palette.py -->
<div class="a" style="left:1256px;top:104px;width:1px;height:789px;background:#A09880;"></div>
<div class="a" style="left:1257px;top:104px;width:1px;height:789px;background:#fff;"></div>
<svg style="left:1264px;top:110px" width="10" height="5" viewBox="0 0 10 5"><path d="M0 5 H10 L5.0 0 Z" fill="#B0A890"/></svg>
<div class="a" style="left:1264px;top:115px;width:10px;height:1px;background:#fff;"></div>
<svg style="left:1260px;top:121px" width="18" height="17" viewBox="0 0 18 17"><rect x="0.500" y="0.500" width="17" height="16" fill="#fff" stroke="#B0A890" stroke-dasharray="1 1"/><rect x="2.600" y="2.600" width="12.800" height="12.800" fill="#fff" stroke="#000" stroke-width="1.200"/><path d="M3 3 L15 15 M15 3 L3 15" stroke="#000" stroke-width="0.900"/></svg>
<div class="a" style="left:1260px;top:138px;width:18px;height:1px;background:#fff;"></div>
<div class="a" style="left:1260px;top:139px;width:18px;height:714px;background:#000;"></div>
<div class="a" style="left:1261px;top:139px;width:16px;height:16px;background:#282020;"></div>
<div class="a" style="left:1261px;top:156px;width:16px;height:16px;background:#484444;"></div>
<div class="a" style="left:1261px;top:173px;width:16px;height:16px;background:#605C60;"></div>
<div class="a" style="left:1261px;top:190px;width:16px;height:16px;background:#706C70;"></div>
<div class="a" style="left:1261px;top:207px;width:16px;height:16px;background:#807C80;"></div>
<div class="a" style="left:1261px;top:224px;width:16px;height:16px;background:#8C888C;"></div>
<div class="a" style="left:1261px;top:241px;width:16px;height:16px;background:#9C989C;"></div>
<div class="a" style="left:1261px;top:258px;width:16px;height:16px;background:#B0A8B0;"></div>
<div class="a" style="left:1261px;top:275px;width:16px;height:16px;background:#C4C0C4;"></div>
<div class="a" style="left:1261px;top:292px;width:16px;height:16px;background:#E0E0E0;"></div>
<div class="a" style="left:1261px;top:309px;width:16px;height:16px;background:#FFFFFF;"></div>
<div class="a" style="left:1261px;top:326px;width:16px;height:16px;background:#301080;"></div>
<div class="a" style="left:1261px;top:343px;width:16px;height:16px;background:#0890E0;"></div>
<div class="a" style="left:1261px;top:360px;width:16px;height:16px;background:#009858;"></div>
<div class="a" style="left:1261px;top:377px;width:16px;height:16px;background:#FFF000;"></div>
<div class="a" style="left:1261px;top:394px;width:16px;height:16px;background:#F04000;"></div>
<div class="a" style="left:1261px;top:411px;width:16px;height:16px;background:#F02880;"></div>
<div class="a" style="left:1261px;top:428px;width:16px;height:16px;background:#A04080;"></div>
<div class="a" style="left:1261px;top:445px;width:16px;height:16px;background:#F88000;"></div>
<div class="a" style="left:1261px;top:462px;width:16px;height:16px;background:#FFA0A8;"></div>
<div class="a" style="left:1261px;top:479px;width:16px;height:16px;background:#786868;"></div>
<div class="a" style="left:1261px;top:496px;width:16px;height:16px;background:#C0B0E0;"></div>
<div class="a" style="left:1261px;top:513px;width:16px;height:16px;background:#9480C0;"></div>
<div class="a" style="left:1261px;top:530px;width:16px;height:16px;background:#6070B8;"></div>
<div class="a" style="left:1261px;top:547px;width:16px;height:16px;background:#7058A8;"></div>
<div class="a" style="left:1261px;top:564px;width:16px;height:16px;background:#887898;"></div>
<div class="a" style="left:1261px;top:581px;width:16px;height:16px;background:#505888;"></div>
<div class="a" style="left:1261px;top:598px;width:16px;height:16px;background:#504860;"></div>
<div class="a" style="left:1261px;top:615px;width:16px;height:16px;background:#687088;"></div>
<div class="a" style="left:1261px;top:632px;width:16px;height:16px;background:#0870C8;"></div>
<div class="a" style="left:1261px;top:649px;width:16px;height:16px;background:#58B8F0;"></div>
<div class="a" style="left:1261px;top:666px;width:16px;height:16px;background:#98B0C8;"></div>
<div class="a" style="left:1261px;top:683px;width:16px;height:16px;background:#808890;"></div>
<div class="a" style="left:1261px;top:700px;width:16px;height:16px;background:#707880;"></div>
<div class="a" style="left:1261px;top:717px;width:16px;height:16px;background:#484850;"></div>
<div class="a" style="left:1261px;top:734px;width:16px;height:16px;background:#506868;"></div>
<div class="a" style="left:1261px;top:751px;width:16px;height:16px;background:#307870;"></div>
<div class="a" style="left:1261px;top:768px;width:16px;height:16px;background:#688888;"></div>
<div class="a" style="left:1261px;top:785px;width:16px;height:16px;background:#189080;"></div>
<div class="a" style="left:1261px;top:802px;width:16px;height:16px;background:#289070;"></div>
<div class="a" style="left:1261px;top:819px;width:16px;height:16px;background:#08A8D0;"></div>
<div class="a" style="left:1261px;top:836px;width:16px;height:16px;background:#3088A0;"></div>
<svg style="left:1264px;top:858px" width="9" height="5" viewBox="0 0 9 5"><path d="M0 0 H9 L4.5 5 Z" fill="#000"/></svg>
<svg style="left:1265px;top:874px" width="7" height="9" viewBox="0 0 7 9"><path d="M1 0 V9" stroke="#000" stroke-width="2"/><path d="M7 0 V9 L2 4.500 Z" fill="#000"/></svg>
<!-- s8_status.py -->
<div class="t" style="left:34.00px;top:917.00px;line-height:13px;letter-spacing:-0.155px;">( 81,670; 127,333 )</div>
<div class="t" style="left:1076.00px;top:900.00px;line-height:12px;font-size:10.12px;letter-spacing:-0.248px;">Fill:</div>
<div class="t" style="left:1076.00px;top:917.00px;line-height:13px;font-size:10.75px;letter-spacing:-0.256px;">Outline:</div>
<div class="a" style="left:1240px;top:898px;width:30px;height:13px;background:#fff;"></div>
<svg style="left:1240px;top:898px" width="30" height="13" viewBox="0 0 30 13"><path d="M5 3 L25.500 10.500 M25.500 3 L5 10.500" stroke="#000" stroke-width="1"/></svg>
<div class="a" style="left:1240px;top:916px;width:30px;height:13px;background:#fff;"></div>
<svg style="left:1240px;top:916px" width="30" height="13" viewBox="0 0 30 13"><path d="M5 3 L25.500 10.500 M25.500 3 L5 10.500" stroke="#000" stroke-width="1"/></svg>
<div class="a" style="left:0px;top:933px;width:1280px;height:1px;background:#fff;"></div>
<div class="a" style="left:2px;top:936px;width:55px;height:22px;background:#EFE7D3;box-shadow:inset -1px -1px 0 #6A6654,inset 1px 1px 0 #fff,inset -2px -2px 0 #A89C80;"></div>
<svg style="left:5px;top:940px" width="17" height="14" viewBox="0 0 17 14"><path d="M1 1.500 H5 M1 4.500 H5 M1 7.500 H5 M1 10.500 H5" stroke="#C00000" stroke-width="1.400" stroke-dasharray="1.500 1"/><path d="M1 3 H5 M1 9 H5" stroke="#0000C0" stroke-width="1.200" stroke-dasharray="1.500 1"/><path d="M5 1 Q9 -1 11 1 Q14 3 17 1 V12 Q14 14 11 12 Q9 10 5 12 Z" fill="#000"/><rect x="7" y="2.500" width="3.500" height="4" fill="#E02020"/><rect x="11.500" y="3.500" width="3.500" height="4" fill="#20B020"/><rect x="7" y="7.500" width="3.500" height="3.500" fill="#2040E0"/><rect x="11.500" y="8.500" width="3.500" height="3.500" fill="#F0E020"/></svg>
<div class="t" style="left:24.00px;top:940.00px;line-height:14px;font-size:11.5px;font-weight:bold;letter-spacing:0.360px;">Start</div>
<div class="a" style="left:59px;top:936px;width:1px;height:22px;background:#A09880;"></div>
<div class="a" style="left:60px;top:936px;width:1px;height:22px;background:#fff;"></div>
<div class="a" style="left:63px;top:938px;width:3px;height:18px;background:#EFE7D3;box-shadow:inset 1px 1px 0 #fff,inset -1px -1px 0 #A09880;"></div>
<svg style="left:73px;top:939px" width="16" height="16" viewBox="0 0 16 16"><rect x="0.500" y="1.500" width="15" height="14" fill="#2880D0" stroke="#104080"/><rect x="3" y="5" width="9" height="9" fill="#F0E8C8" stroke="#806030" stroke-width="0.800"/><rect x="5" y="7" width="5" height="6" fill="#fff" stroke="#000" stroke-width="0.800"/><path d="M8 9 L14 1" stroke="#E0A020" stroke-width="2"/><path d="M13.500 0.500 L15 2" stroke="#D02020" stroke-width="2"/></svg>
<svg style="left:96px;top:939px" width="16" height="16" viewBox="0 0 16 16"><path d="M1 14 Q-1 9 6 4 Q12 0 15 2" fill="none" stroke="#4090E0" stroke-width="1.300"/><circle cx="8.500" cy="9" r="5.800" fill="none" stroke="#2878E0" stroke-width="3"/><rect x="6" y="8" width="9" height="2" fill="#2878E0"/><rect x="10" y="10" width="6" height="2.500" fill="#EFE7D3"/></svg>
<svg style="left:119px;top:939px" width="16" height="16" viewBox="0 0 16 16"><rect x="3" y="3" width="12" height="9" fill="#E8F0F8" stroke="#7090C0"/><path d="M3 3 L9 8 L15 3" fill="none" stroke="#7090C0"/><rect x="11" y="4" width="2.500" height="2" fill="#E06020"/><path d="M1 8 Q1 3 7 2 V0 L10 3.500 L7 7 V5 Q3 5 1 8 Z" fill="#3080E0"/><path d="M13 10 Q13 14 7 15 V16 L4 13 L7 10 V12 Q11 12 13 10 Z" fill="#3080E0"/></svg>
<svg style="left:142px;top:939px" width="16" height="16" viewBox="0 0 16 16"><circle cx="8" cy="8" r="7.500" fill="#E86A10"/><circle cx="8.500" cy="7" r="5" fill="#3060C0"/><path d="M1 6 Q3 2 6 3 Q4 6 7 8 Q10 9 12 6 Q15 8 13 12 Q9 16 4 13 Q0 10 1 6 Z" fill="#F08020"/><path d="M2 5 Q4 2 6 3 Q4 5 5 7 Z" fill="#F8C040"/></svg>
<svg style="left:165px;top:939px" width="17" height="16" viewBox="0 0 17 16"><g transform="translate(7,0.500)"><rect x="0.500" y="0.500" width="8" height="6" fill="#C0C8D0" stroke="#000" stroke-width="0.800"/><rect x="1.800" y="1.600" width="5.400" height="3.800" fill="#2040C0"/><path d="M-0.500 8.500 H9.500 L10.500 10 H-1.500 Z" fill="#D8D8D8" stroke="#000" stroke-width="0.700"/></g><g transform="translate(2,5.500)"><rect x="0.500" y="0.500" width="8" height="6" fill="#C0C8D0" stroke="#000" stroke-width="0.800"/><rect x="1.800" y="1.600" width="5.400" height="3.800" fill="#2040C0"/><path d="M-0.500 8.500 H9.500 L10.500 10 H-1.500 Z" fill="#D8D8D8" stroke="#000" stroke-width="0.700"/></g><path d="M5 10 L11 3 M6 5 L11 8" stroke="#F0E000" stroke-width="1.800"/></svg>
<svg style="left:189px;top:940px" width="16" height="14" viewBox="0 0 16 14"><path d="M0 8 Q3 4 8 5 L15 1 L11 8 Q9 13 3 12 Q0 11 0 8 Z" fill="#585048"/><path d="M2 8 Q4 6 7 7" stroke="#C0B8A8" fill="none"/><circle cx="4" cy="8" r="1" fill="#fff"/><path d="M8 5 L15 1 L11 7" fill="#807868"/></svg>
<svg style="left:211px;top:939px" width="16" height="16" viewBox="0 0 16 16"><path d="M8 0.500 L15.500 7 L8 15.500 L0.500 9 Z" fill="#F0F0E8" stroke="#202020" stroke-width="1.600"/><path d="M12 3 L7 7 L9.500 8.500 L4 13 L6 8.500 L3.500 7.500 Z" fill="#F09010" stroke="#C06000" stroke-width="0.600"/></svg>
<svg style="left:234px;top:939px" width="16" height="16" viewBox="0 0 16 16"><rect x="0" y="0" width="16" height="16" fill="#1840A0"/><rect x="0" y="8" width="16" height="8" fill="#103080"/><path d="M2 2.500 H4 Q5.500 2.500 5.500 4.500 Q5.500 6.500 4 6.500 H2 Z M7 2.500 V6.500 H9.500 M7 4.500 H9 M7 2.500 H9.500 M10.500 2.500 L12 6.500 L13.500 2.500" fill="none" stroke="#fff" stroke-width="1.200"/><path d="M5.500 10 Q2.500 10 2.500 12 Q2.500 14 5.500 14 M7 12 H10 M8.500 10.500 V13.500 M11 12 H14 M12.500 10.500 V13.500" fill="none" stroke="#40A0F0" stroke-width="1.200"/></svg>
<svg style="left:257px;top:939px" width="16" height="16" viewBox="0 0 16 16"><rect x="0" y="0" width="16" height="16" fill="#F8981C"/><path d="M0 16 L16 6 V16 Z" fill="#F8A838"/><path d="M3.500 11 V6.500 Q3.500 5.500 5 5.500 Q6.500 5.500 6.500 6.500 V11 M6.500 6.500 Q6.500 5.500 8 5.500 Q9.500 5.500 9.500 6.500 V11" fill="none" stroke="#fff" stroke-width="1.600"/><rect x="12" y="4" width="1" height="1" fill="#fff"/></svg>
<div class="a" style="left:314px;top:936px;width:1px;height:22px;background:#A09880;"></div>
<div class="a" style="left:315px;top:936px;width:1px;height:22px;background:#fff;"></div>
<div class="a" style="left:318px;top:938px;width:3px;height:18px;background:#EFE7D3;box-shadow:inset 1px 1px 0 #fff,inset -1px -1px 0 #A09880;"></div>
<div class="a" style="left:325px;top:936px;width:160px;height:22px;background:#EFE7D3;box-shadow:inset -1px -1px 0 #6A6654,inset 1px 1px 0 #fff,inset -2px -2px 0 #A89C80;"></div>
<svg style="left:329px;top:942px" width="16" height="11" viewBox="0 0 16 11"><path d="M2 1.500 H14 L15.500 3 V8 L14 9.500 H2 L0.500 8 V3 Z" fill="#D8D8D8" stroke="#000"/><rect x="3" y="4" width="10" height="2.500" fill="#000"/><rect x="2" y="4" width="1.500" height="1.500" fill="#E02020"/></svg>
<div class="t" style="left:346.00px;top:941.00px;line-height:13px;letter-spacing:-0.087px;">Dysk wymienny (F:)</div>
<div class="a" style="left:488px;top:936px;width:160px;height:22px;background:#EFE7D3;box-shadow:inset -1px -1px 0 #6A6654,inset 1px 1px 0 #fff,inset -2px -2px 0 #A89C80;"></div>
<svg style="left:492px;top:939px" width="16" height="16" viewBox="0 0 16 16"><circle cx="8" cy="8" r="7.500" fill="#E86A10"/><circle cx="8.500" cy="7" r="5" fill="#3060C0"/><path d="M1 6 Q3 2 6 3 Q4 6 7 8 Q10 9 12 6 Q15 8 13 12 Q9 16 4 13 Q0 10 1 6 Z" fill="#F08020"/><path d="M2 5 Q4 2 6 3 Q4 5 5 7 Z" fill="#F8C040"/></svg>
<div class="t" style="left:510.00px;top:941.00px;line-height:13px;letter-spacing:-0.184px;">Corel FORUM :: Napisz no...</div>
<div class="a" style="left:651px;top:936px;width:160px;height:22px;background:#EFE7D3;box-shadow:inset -1px -1px 0 #6A6654,inset 1px 1px 0 #fff,inset -2px -2px 0 #A89C80;"></div>
<svg style="left:655px;top:939px" width="16" height="16" viewBox="0 0 16 16"><path d="M0.500 4 H6 L7.500 5.500 H15.500 V15 H0.500 Z" fill="#F0D060" stroke="#B09020"/><rect x="4" y="1" width="9" height="11" fill="#E8F0FF" stroke="#7090D0"/><path d="M5.500 4 H11 M5.500 6 H11 M5.500 8 H11" stroke="#90B0E0"/><path d="M0.500 15 L2 9 H15 L15.500 15 Z" fill="#F8E080" stroke="#B09020"/></svg>
<div class="t" style="left:672.00px;top:941.00px;line-height:13px;letter-spacing:-0.193px;">Moje dokumenty</div>
<div class="a" style="left:814px;top:936px;width:159px;height:22px;background-image:repeating-conic-gradient(#fff 0 25%,#EFE7D3 0 50%);background-size:2px 2px;box-shadow:inset 1px 1px 0 #6A6654,inset -1px -1px 0 #fff,inset 2px 2px 0 #A89C80;"></div>
<svg style="left:819px;top:939px" width="16" height="16" viewBox="0 0 17 17"><path d="M15.800 0.600 C17.300 4 17.200 9.500 14 13.500 C11.500 16.500 6 17.600 2.500 14.700 C-0.500 11.700 -0.300 7 2.500 4 C5.500 1 11 0.200 15.800 0.600 Z" fill="#2A8E44"/><path d="M14.500 2 C15.600 5 15.300 9 12.800 12.300 C10.600 14.800 6.500 15.600 3.800 13.400 C1.500 11 1.700 7.500 3.800 5.200 C6.200 2.800 10.500 1.800 14.500 2 Z" fill="#58B46C"/><path d="M14.200 2.200 L5.500 6.500 L11.500 11.500 Q14.800 7 14.200 2.200 Z" fill="#EE7A1C"/><path d="M12.800 3.500 L8 7.500 M13.500 5.500 L10 9.500" stroke="#7A3208" stroke-width="0.900" fill="none"/><path d="M5.500 6 Q9 7 11 11.500 Q8.500 14.800 5 13.200 Q2.600 10.500 5.500 6 Z" fill="#F6E05C"/><path d="M7.500 7.500 L8.500 10 M10.500 9.500 L10 11.500" stroke="#50380C" stroke-width="0.900"/><path d="M3.500 12.200 L6.500 13.600 L4.200 14.200 Z" fill="#fff"/></svg>
<div class="t" style="left:836.00px;top:940.00px;line-height:14px;font-size:11.5px;font-weight:bold;letter-spacing:0.008px;">CorelDRAW 9 - [Graphi...</div>
<div class="a" style="left:1084px;top:936px;width:1px;height:22px;background:#A09880;"></div>
<div class="a" style="left:1085px;top:936px;width:1px;height:22px;background:#fff;"></div>
<div class="a" style="left:1088px;top:936px;width:190px;height:22px;box-shadow:inset 1px 1px 0 #A09880,inset -1px -1px 0 #fff;"></div>
<svg style="left:1091px;top:939px" width="16" height="16" viewBox="0 0 16 16"><rect x="0.500" y="0.500" width="12" height="11" fill="#fff" stroke="#000"/><rect x="1" y="1" width="11" height="3" fill="#2020A0"/><rect x="2" y="1.500" width="1.500" height="2" fill="#fff"/><rect x="5" y="1.500" width="1.500" height="2" fill="#fff"/><circle cx="11" cy="11" r="4" fill="#fff" stroke="#C01010" stroke-width="1.800"/><path d="M11 9 V11 H12.500" stroke="#000" fill="none"/></svg>
<div class="a" style="left:1108px;top:939px;width:16px;height:16px;background:#107880;"></div>
<div class="t" style="left:1111.00px;top:941.00px;line-height:14px;font-size:12px;color:#fff;">Pl</div>
<svg style="left:1125px;top:939px" width="16" height="16" viewBox="0 0 16 16"><path d="M2 11 L9 7 L15 10 L8 14.500 Z" fill="#E0E0E0" stroke="#404040"/><path d="M2 11 V12.500 L8 16 V14.500" fill="#A0A0A0" stroke="#404040" stroke-width="0.600"/><path d="M4 2 L11 0 L6 7 L5 5 L1 6 Z" fill="#20B030" stroke="#106018" stroke-width="0.600"/><path d="M12 3 L9 5" stroke="#20B030" stroke-width="2"/><rect x="12" y="10" width="2" height="1.500" fill="#20A030"/></svg>
<svg style="left:1142px;top:939px" width="16" height="16" viewBox="0 0 16 16"><path d="M1 6 H4 L9 1 V15 L4 10 H1 Z" fill="#F0E060" stroke="#605000" stroke-width="0.900"/><path d="M6 4 V12" stroke="#A09020"/><path d="M11 5 L14 3 M11 8 H15 M11 11 L14 13" stroke="#B0B0B0" stroke-width="1"/></svg>
<svg style="left:1159px;top:939px" width="16" height="16" viewBox="0 0 16 16"><rect x="5" y="2" width="10" height="13" fill="#B8B8B0" stroke="#303030"/><rect x="7" y="5" width="6" height="7" fill="#E0D8B0" stroke="#505050" stroke-width="0.800"/><circle cx="10" cy="8.500" r="1.500" fill="#707060"/><path d="M1 2 L4 4 L2 7 L5 9 L2 12 L4 14" fill="none" stroke="#000" stroke-width="1.600"/><path d="M5 1 L15 2" stroke="#303030"/></svg>
<svg style="left:1176px;top:939px" width="16" height="16" viewBox="0 0 16 16"><path d="M8 0.500 L15.500 7 L8 15.500 L0.500 9 Z" fill="#F0F0E8" stroke="#202020" stroke-width="1.600"/><path d="M12 3 L7 7 L9.500 8.500 L4 13 L6 8.500 L3.500 7.500 Z" fill="#F09010" stroke="#C06000" stroke-width="0.600"/></svg>
<svg style="left:1193px;top:939px" width="16" height="16" viewBox="0 0 16 16"><rect x="0" y="0" width="16" height="16" fill="#D8ECF8"/><path d="M0 7 Q6 6 9 12 Q5 9 0 10 Z M7 5 Q12 6 13 12 Q10 7 6 7 Z M12 4 Q15 6 15 11 Q14 7 11 5.500 Z" fill="#2080D0"/><circle cx="3" cy="3" r="2.200" fill="#F01010"/></svg>
<svg style="left:1210px;top:939px" width="16" height="16" viewBox="0 0 16 16"><path d="M12.5 8.0 L15.8 8.0 M11.2 11.2 L13.5 13.5 M8.0 12.5 L8.0 15.8 M4.8 11.2 L2.5 13.5 M3.5 8.0 L0.2 8.0 M4.8 4.8 L2.5 2.5 M8.0 3.5 L8.0 0.2 M11.2 4.8 L13.5 2.5 " stroke="#E82010" stroke-width="2.200"/><circle cx="8" cy="8" r="4.800" fill="#F8E010" stroke="#E8A010" stroke-width="0.600"/><circle cx="6.300" cy="6.800" r="0.800" fill="#000"/><circle cx="9.700" cy="6.800" r="0.800" fill="#000"/><path d="M5.500 9 Q8 11.500 10.500 9" fill="none" stroke="#000" stroke-width="0.900"/></svg>
<div class="t" style="left:1238.00px;top:942.00px;line-height:13px;letter-spacing:-0.005px;">09:50</div>
</body>
</html>
